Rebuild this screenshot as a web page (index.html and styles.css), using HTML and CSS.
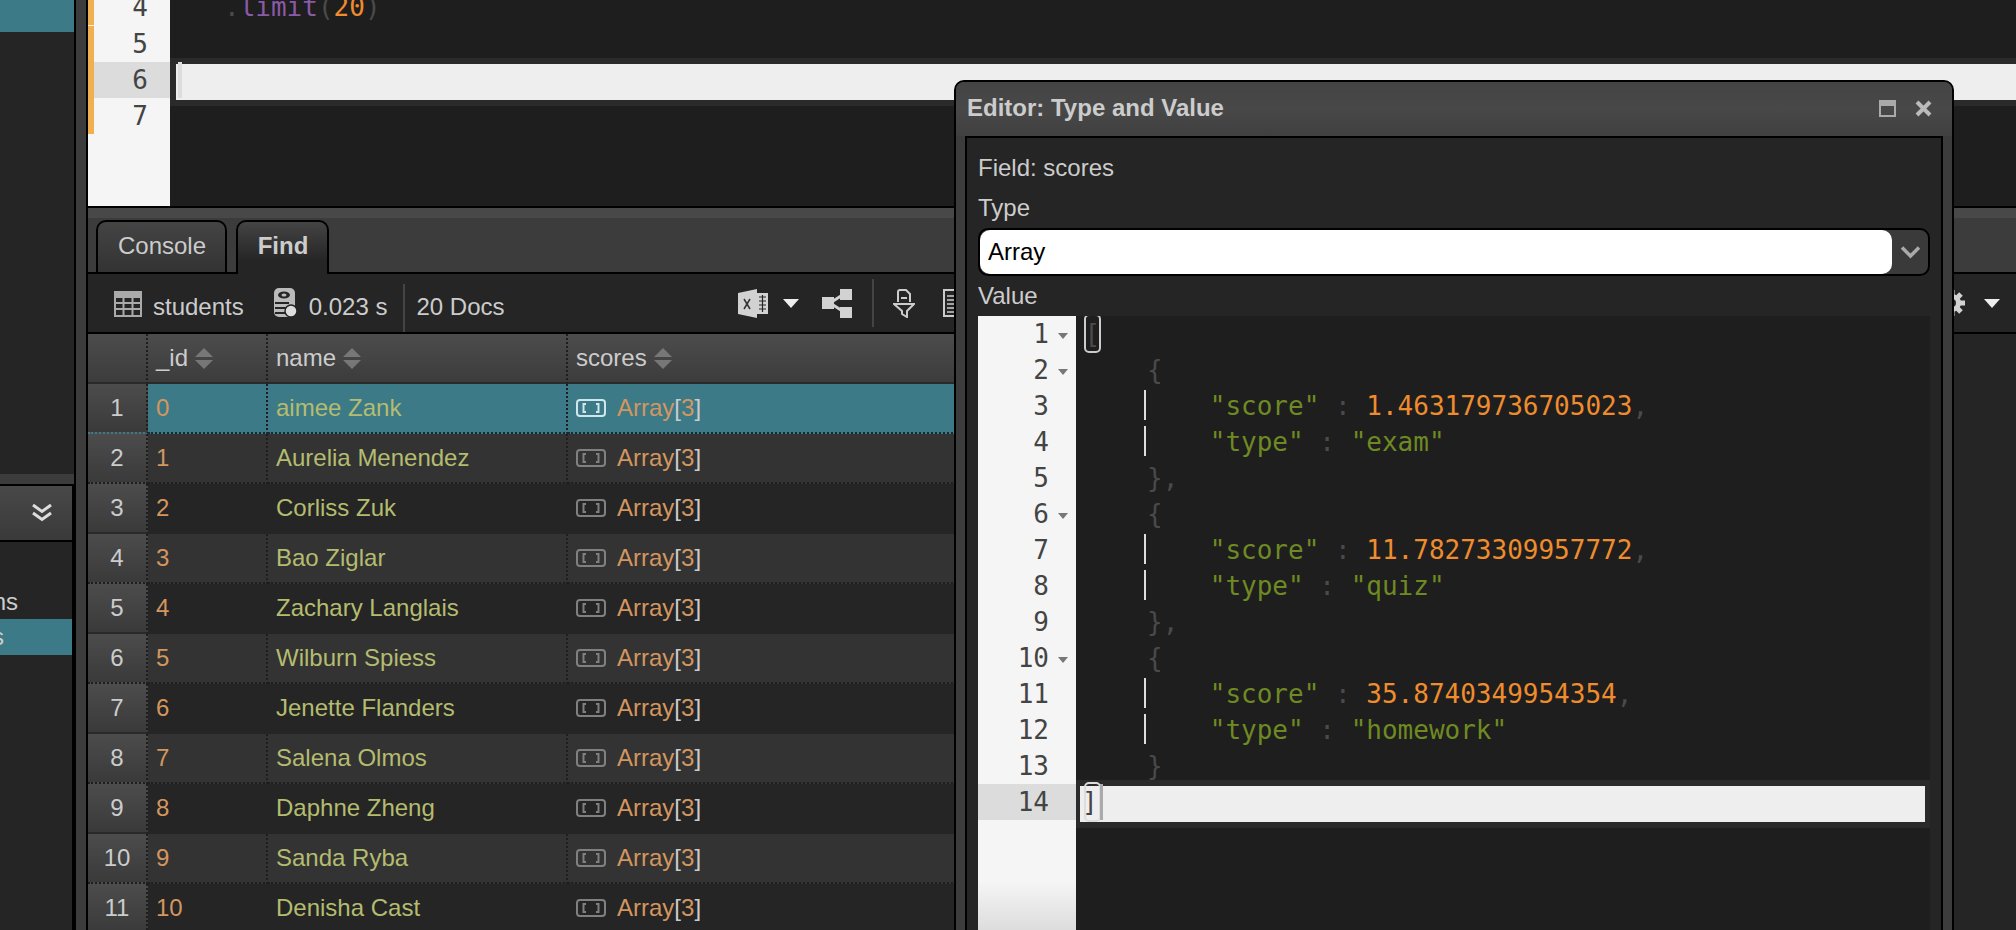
FILE: index.html
```html
<!DOCTYPE html>
<html lang="en">
<head>
<meta charset="utf-8">
<title>Editor: Type and Value</title>
<link rel="stylesheet" href="styles.css">
</head>
<body>
<div class="app">
  <aside class="sidebar">
    <div class="side-top"><div class="side-teal"></div></div>
    <div class="side-strip"></div>
    <div class="side-head">
      <svg class="chev" viewBox="0 0 22 20"><path d="M2 2l9 6.500L20 2M2 10l9 6.500L20 10" fill="none" stroke="#ddd" stroke-width="3"/></svg>
    </div>
    <div class="side-list">
      <div class="tree-row tree-plain">Collections</div>
      <div class="tree-row tree-sel">students</div>
    </div>
  </aside>
  <div class="splitter"></div>
  <main class="main">
    <section class="editor">
      <div class="ed-gutter">
        <div class="g-line">4</div>
        <div class="g-line">5</div>
        <div class="g-line g-active">6</div>
        <div class="g-line">7</div>
      </div>
      <div class="ed-code">
        <div class="c-line"><span class="p">   .</span><span class="fn">limit</span><span class="p">(</span><span class="n">20</span><span class="p">)</span></div>
        <div class="c-line"></div>
        <div class="c-line c-active"><i class="cursor-tint"></i></div>
        <div class="c-line"></div>
      </div>
    </section>
    <nav class="tabs">
      <div class="tab">Console</div>
      <div class="tab tab-on">Find</div>
    </nav>
    <div class="toolbar">
      <div class="tb-left">
        <svg class="ic-table" viewBox="0 0 28 26"><rect x="1" y="1" width="26" height="24" fill="none" stroke="#aaa" stroke-width="2"/><rect x="1" y="1" width="26" height="6" fill="#aaa"/><path d="M1 12h26M1 18h26M9.500 7v18M18.500 7v18" stroke="#aaa" stroke-width="2"/></svg>
        <span class="tb-text tb-name">students</span>
        <svg class="ic-db" viewBox="0 0 24 30"><rect x="1" y="0" width="21" height="29" rx="5" fill="#bbb"/><ellipse cx="11" cy="7" rx="6" ry="3.500" fill="#252525"/><ellipse cx="11" cy="7" rx="2.500" ry="1.500" fill="#bbb"/><path d="M2 15h14M2 20h11M2 25h10" stroke="#252525" stroke-width="2"/><circle cx="18" cy="23" r="6" fill="#ddd" stroke="#252525" stroke-width="1.500"/></svg>
        <span class="tb-text tb-time">0.023 s</span>
        <span class="tb-sep"></span>
        <span class="tb-text tb-docs">20 Docs</span>
      </div>
      <svg class="ic-excel" viewBox="0 0 30 29"><path d="M0 4L19 0v29L0 25z" fill="#d2d2d2"/><path d="M19 4h11v21H19z" fill="#d2d2d2"/><path d="M21 8h7M21 12h7M21 16h7M21 20h7M24.500 6v17" stroke="#252525" stroke-width="1.200"/><path d="M6 10l6 10M12 10l-6 10" stroke="#333" stroke-width="1.500"/></svg>
      <i class="caret caret-excel"></i>
      <svg class="ic-share" viewBox="0 0 30 29"><rect x="0" y="8" width="12" height="12" fill="#d2d2d2"/><rect x="18" y="0" width="12" height="11" fill="#d2d2d2"/><rect x="18" y="18" width="12" height="11" fill="#d2d2d2"/><path d="M8 14l14-9M8 14l14 9" stroke="#d2d2d2" stroke-width="3"/></svg>
      <span class="tb-sep tb-sep2"></span>
      <svg class="ic-filter" viewBox="0 0 22 29"><path d="M5 13V3a2 2 0 0 1 2-2h6l4 4v8" fill="none" stroke="#ccc" stroke-width="2"/><path d="M8 9h6" stroke="#ccc" stroke-width="2"/><path d="M1 15h20l-7 7v6l-5-3v-3z" fill="none" stroke="#ccc" stroke-width="2"/></svg>
      <svg class="ic-doc" viewBox="0 0 20 28"><rect x="1" y="1" width="18" height="26" fill="none" stroke="#ccc" stroke-width="2"/><path d="M4 7h12M4 11h12M4 15h12M4 19h12M4 23h12" stroke="#ccc" stroke-width="1.500"/></svg>
      <svg class="ic-gear" viewBox="0 0 28 28"><circle cx="14" cy="14" r="9" fill="#d2d2d2"/><g stroke="#d2d2d2" stroke-width="5"><path d="M14 1v26M1 14h26M5 5l18 18M23 5L5 23"/></g><circle cx="14" cy="14" r="4" fill="#252525"/></svg>
      <i class="caret caret-gear"></i>
    </div>
    <div class="grid">
      <div class="row head">
        <div class="num"></div>
        <div class="cell">_id<i class="sort"></i></div>
        <div class="cell">name<i class="sort"></i></div>
        <div class="cell">scores<i class="sort"></i></div>
      </div>
      <div class="row sel"><div class="num">1</div><div class="cell id">0</div><div class="cell nm">aimee Zank</div><div class="cell arr"><svg class="ic-arr" viewBox="0 0 30 18"><rect x="1" y="1" width="28" height="16" rx="3" fill="none" stroke="currentColor" stroke-width="2"/><path d="M10 5H7.500v8H10M20 5h2.500v8H20" fill="none" stroke="currentColor" stroke-width="2"/></svg><span class="id">Array</span><b>[</b><span class="id">3</span><b>]</b></div></div>
      <div class="row odd"><div class="num">2</div><div class="cell id">1</div><div class="cell nm">Aurelia Menendez</div><div class="cell arr"><svg class="ic-arr" viewBox="0 0 30 18"><rect x="1" y="1" width="28" height="16" rx="3" fill="none" stroke="currentColor" stroke-width="2"/><path d="M10 5H7.500v8H10M20 5h2.500v8H20" fill="none" stroke="currentColor" stroke-width="2"/></svg><span class="id">Array</span><b>[</b><span class="id">3</span><b>]</b></div></div>
      <div class="row even"><div class="num">3</div><div class="cell id">2</div><div class="cell nm">Corliss Zuk</div><div class="cell arr"><svg class="ic-arr" viewBox="0 0 30 18"><rect x="1" y="1" width="28" height="16" rx="3" fill="none" stroke="currentColor" stroke-width="2"/><path d="M10 5H7.500v8H10M20 5h2.500v8H20" fill="none" stroke="currentColor" stroke-width="2"/></svg><span class="id">Array</span><b>[</b><span class="id">3</span><b>]</b></div></div>
      <div class="row odd"><div class="num">4</div><div class="cell id">3</div><div class="cell nm">Bao Ziglar</div><div class="cell arr"><svg class="ic-arr" viewBox="0 0 30 18"><rect x="1" y="1" width="28" height="16" rx="3" fill="none" stroke="currentColor" stroke-width="2"/><path d="M10 5H7.500v8H10M20 5h2.500v8H20" fill="none" stroke="currentColor" stroke-width="2"/></svg><span class="id">Array</span><b>[</b><span class="id">3</span><b>]</b></div></div>
      <div class="row even"><div class="num">5</div><div class="cell id">4</div><div class="cell nm">Zachary Langlais</div><div class="cell arr"><svg class="ic-arr" viewBox="0 0 30 18"><rect x="1" y="1" width="28" height="16" rx="3" fill="none" stroke="currentColor" stroke-width="2"/><path d="M10 5H7.500v8H10M20 5h2.500v8H20" fill="none" stroke="currentColor" stroke-width="2"/></svg><span class="id">Array</span><b>[</b><span class="id">3</span><b>]</b></div></div>
      <div class="row odd"><div class="num">6</div><div class="cell id">5</div><div class="cell nm">Wilburn Spiess</div><div class="cell arr"><svg class="ic-arr" viewBox="0 0 30 18"><rect x="1" y="1" width="28" height="16" rx="3" fill="none" stroke="currentColor" stroke-width="2"/><path d="M10 5H7.500v8H10M20 5h2.500v8H20" fill="none" stroke="currentColor" stroke-width="2"/></svg><span class="id">Array</span><b>[</b><span class="id">3</span><b>]</b></div></div>
      <div class="row even"><div class="num">7</div><div class="cell id">6</div><div class="cell nm">Jenette Flanders</div><div class="cell arr"><svg class="ic-arr" viewBox="0 0 30 18"><rect x="1" y="1" width="28" height="16" rx="3" fill="none" stroke="currentColor" stroke-width="2"/><path d="M10 5H7.500v8H10M20 5h2.500v8H20" fill="none" stroke="currentColor" stroke-width="2"/></svg><span class="id">Array</span><b>[</b><span class="id">3</span><b>]</b></div></div>
      <div class="row odd"><div class="num">8</div><div class="cell id">7</div><div class="cell nm">Salena Olmos</div><div class="cell arr"><svg class="ic-arr" viewBox="0 0 30 18"><rect x="1" y="1" width="28" height="16" rx="3" fill="none" stroke="currentColor" stroke-width="2"/><path d="M10 5H7.500v8H10M20 5h2.500v8H20" fill="none" stroke="currentColor" stroke-width="2"/></svg><span class="id">Array</span><b>[</b><span class="id">3</span><b>]</b></div></div>
      <div class="row even"><div class="num">9</div><div class="cell id">8</div><div class="cell nm">Daphne Zheng</div><div class="cell arr"><svg class="ic-arr" viewBox="0 0 30 18"><rect x="1" y="1" width="28" height="16" rx="3" fill="none" stroke="currentColor" stroke-width="2"/><path d="M10 5H7.500v8H10M20 5h2.500v8H20" fill="none" stroke="currentColor" stroke-width="2"/></svg><span class="id">Array</span><b>[</b><span class="id">3</span><b>]</b></div></div>
      <div class="row odd"><div class="num">10</div><div class="cell id">9</div><div class="cell nm">Sanda Ryba</div><div class="cell arr"><svg class="ic-arr" viewBox="0 0 30 18"><rect x="1" y="1" width="28" height="16" rx="3" fill="none" stroke="currentColor" stroke-width="2"/><path d="M10 5H7.500v8H10M20 5h2.500v8H20" fill="none" stroke="currentColor" stroke-width="2"/></svg><span class="id">Array</span><b>[</b><span class="id">3</span><b>]</b></div></div>
      <div class="row even"><div class="num">11</div><div class="cell id">10</div><div class="cell nm">Denisha Cast</div><div class="cell arr"><svg class="ic-arr" viewBox="0 0 30 18"><rect x="1" y="1" width="28" height="16" rx="3" fill="none" stroke="currentColor" stroke-width="2"/><path d="M10 5H7.500v8H10M20 5h2.500v8H20" fill="none" stroke="currentColor" stroke-width="2"/></svg><span class="id">Array</span><b>[</b><span class="id">3</span><b>]</b></div></div>
    </div>
  </main>
</div>

<div class="dialog">
  <header class="dlg-title">
    <span class="dlg-name">Editor: Type and Value</span>
    <svg class="ic-max" viewBox="0 0 17 17"><rect x="1" y="1" width="15" height="15" fill="none" stroke="#aaa" stroke-width="2"/><rect x="1" y="1" width="15" height="5" fill="#aaa"/></svg>
    <svg class="ic-close" viewBox="0 0 17 17"><path d="M2 2l13 13M15 2L2 15" stroke="#bbb" stroke-width="4"/></svg>
  </header>
  <div class="dlg-body">
    <div class="lbl lbl-field">Field: scores</div>
    <div class="lbl lbl-type">Type</div>
    <div class="select">
      <div class="select-val">Array</div>
      <svg class="select-chev" viewBox="0 0 21 14"><path d="M2 2.500l8.500 8.500 8.500-8.500" fill="none" stroke="#aaa" stroke-width="3.500"/></svg>
    </div>
    <div class="lbl lbl-value">Value</div>
    <div class="json">
      <div class="j-gutter">
        <div class="jg"><span>1</span><i class="fold"></i></div>
        <div class="jg"><span>2</span><i class="fold"></i></div>
        <div class="jg"><span>3</span><i class="nofold"></i></div>
        <div class="jg"><span>4</span><i class="nofold"></i></div>
        <div class="jg"><span>5</span><i class="nofold"></i></div>
        <div class="jg"><span>6</span><i class="fold"></i></div>
        <div class="jg"><span>7</span><i class="nofold"></i></div>
        <div class="jg"><span>8</span><i class="nofold"></i></div>
        <div class="jg"><span>9</span><i class="nofold"></i></div>
        <div class="jg"><span>10</span><i class="fold"></i></div>
        <div class="jg"><span>11</span><i class="nofold"></i></div>
        <div class="jg"><span>12</span><i class="nofold"></i></div>
        <div class="jg"><span>13</span><i class="nofold"></i></div>
        <div class="jg jg-active"><span>14</span><i class="nofold"></i></div>
      </div>
      <div class="j-code">
        <div class="jl"><i class="match match-open"></i><span class="p">[</span></div>
        <div class="jl"><span class="p">    {</span></div>
        <div class="jl"><i class="guide"></i>        <span class="s">"score"</span><span class="p"> : </span><span class="n">1.463179736705023</span><span class="p">,</span></div>
        <div class="jl"><i class="guide"></i>        <span class="s">"type"</span><span class="p"> : </span><span class="s">"exam"</span></div>
        <div class="jl"><span class="p">    },</span></div>
        <div class="jl"><span class="p">    {</span></div>
        <div class="jl"><i class="guide"></i>        <span class="s">"score"</span><span class="p"> : </span><span class="n">11.78273309957772</span><span class="p">,</span></div>
        <div class="jl"><i class="guide"></i>        <span class="s">"type"</span><span class="p"> : </span><span class="s">"quiz"</span></div>
        <div class="jl"><span class="p">    },</span></div>
        <div class="jl"><span class="p">    {</span></div>
        <div class="jl"><i class="guide"></i>        <span class="s">"score"</span><span class="p"> : </span><span class="n">35.8740349954354</span><span class="p">,</span></div>
        <div class="jl"><i class="guide"></i>        <span class="s">"type"</span><span class="p"> : </span><span class="s">"homework"</span></div>
        <div class="jl"><span class="p">    }</span></div>
        <div class="jl jl-active"><i class="match match-close"></i><i class="cursor"></i><span class="close-br">]</span></div>
      </div>
    </div>
  </div>
</div>
</body>
</html>
```

FILE: styles.css
```css
* { box-sizing: border-box; }
html, body { margin: 0; height: 100%; overflow: hidden; background: #252525; }
body { font: 24px/1.2 "Liberation Sans", Arial, sans-serif; color: #ccc; position: relative; }
i { display: block; font-style: normal; }
svg { display: block; flex: none; }

.app { display: flex; width: 2016px; height: 930px; overflow: hidden; }

/* sidebar */
.sidebar { width: 76px; flex: none; display: flex; flex-direction: column; background: #000; }
.side-top { height: 474px; background: #252525; margin-right: 2px; }
.side-teal { height: 32px; background: #3d7a87; }
.side-strip { height: 10px; background: #3c3c3c; margin-right: 2px; }
.side-head { height: 58px; border-top: 2px solid #000; border-bottom: 2px solid #000; margin-right: 4px; background: linear-gradient(#484848, #3a3a3a); display: flex; align-items: center; justify-content: flex-end; padding-right: 19px; }
.chev { width: 22px; height: 20px; }
.side-list { flex: 1; background: #252525; margin-right: 4px; padding-top: 42px; overflow: hidden; }
.tree-row { height: 35px; line-height: 35px; display: flex; justify-content: flex-end; white-space: nowrap; overflow: hidden; }
.tree-plain { padding-right: 54px; }
.tree-sel { height: 36px; line-height: 36px; background: #3d7a87; padding-right: 68px; }

.splitter { width: 12px; flex: none; background: #3c3c3c; border-right: 2px solid #000; }

/* main */
.main { flex: 1; min-width: 0; display: flex; flex-direction: column; background: #252525; }

/* top editor */
.editor { height: 208px; flex: none; display: flex; background: #1e1e1e; border-bottom: 2px solid #000; overflow: hidden; font: 26px/36px "DejaVu Sans Mono", monospace; }
.ed-gutter { width: 82px; flex: none; background: #f5f5f5; color: #444; }
.g-line { height: 36px; padding-right: 22px; text-align: right; border-left: 6px solid #f0b050; }
.g-line:first-child { margin-top: -11px; margin-bottom: 1px; }
.g-active { background: #dcdcdc; }
.ed-code { flex: 1; isolation: isolate; }
.c-line { height: 36px; position: relative; padding-left: 7px; white-space: pre; }
.c-line:first-child { margin-top: -11px; margin-bottom: 1px; }
.c-active::before { content: ""; position: absolute; left: 0; right: 0; top: -4px; height: 48px; background: #2a2a2a; z-index: -2; }
.c-active::after { content: ""; position: absolute; left: 6px; right: 0; top: 2px; height: 36px; background: #eee; z-index: -1; }
.cursor-tint { position: absolute; left: 8px; top: 0; width: 4px; height: 36px; background: #ddd; }
.p { color: #4a4a4a; }
.fn { color: #8a5aa8; }
.n { color: #ef8c2d; }
.s { color: #6f8a22; }

/* tabs */
.tabs { height: 66px; flex: none; background: linear-gradient(#484848 0 10px, #3c3c3c 10px); border-bottom: 2px solid #000; display: flex; align-items: flex-end; padding-left: 8px; gap: 9px; }
.tab { height: 52px; width: 131px; border: 2px solid #000; border-bottom: 0; border-radius: 10px 10px 0 0; background: linear-gradient(#444, #333); text-align: center; line-height: 48px; padding-left: 1px; }
.tab-on { width: 93px; height: 54px; margin-bottom: -2px; font-weight: bold; line-height: 48px; background: linear-gradient(#444, #252525 75%); }

/* toolbar */
.toolbar { height: 60px; flex: none; display: flex; align-items: center; background: #252525; border-bottom: 2px solid #000; overflow: hidden; }
.tb-left { width: 650px; flex: none; display: flex; align-items: center; padding-left: 26px; height: 100%; }
.tb-text { position: relative; top: 4px; }
.ic-table { width: 28px; height: 26px; margin-top: 2px; }
.tb-name { margin-left: 11px; }
.ic-db { width: 24px; height: 30px; margin-left: 29px; }
.tb-time { margin-left: 12px; }
.tb-sep { width: 2px; height: 48px; background: #444; margin-left: 16px; margin-top: 10px; }
.tb-docs { margin-left: 11px; }
.ic-excel { width: 30px; height: 29px; }
.caret { width: 0; height: 0; border-left: 8px solid transparent; border-right: 8px solid transparent; border-top: 9px solid #eee; }
.caret-excel { margin-left: 15px; }
.ic-share { width: 30px; height: 29px; margin-left: 23px; }
.tb-sep2 { margin-left: 20px; margin-top: 0; }
.ic-filter { width: 22px; height: 29px; margin-left: 19px; }
.ic-doc { width: 20px; height: 28px; margin-left: 28px; }
.ic-gear { width: 28px; height: 28px; margin-left: auto; }
.caret-gear { margin-left: 18px; margin-right: 16px; }

/* grid */
.grid { width: 1400px; flex: none; }
.row { display: grid; grid-template-columns: 60px 120px 300px 1fr; height: 50px; align-items: stretch; }
.num, .cell { display: flex; align-items: center; line-height: 48px; border-bottom: 2px dotted #1e1e1e; }
.num { justify-content: center; background: linear-gradient(#4c4c4c, #3a3a3a); border-right: 2px dotted #1e1e1e; }
.cell { padding-left: 8px; border-right: 2px dotted #1e1e1e; }
.head .num, .head .cell { background: linear-gradient(#4c4c4c, #3c3c3c); border-bottom: 2px solid #2a2a2a; }
.head { background: #3c3c3c; }
.sel { background: #3d7a87; }
.sel .num { border-bottom-color: #3d7a87; }
.sel .cell { border-bottom-color: #1a2a2e; }
.sel .ic-arr { color: #cfe6ec; }
.odd { background: #333; }
.even { background: #252525; }
.even .cell { border-color: #252525; }
.even .num { border-bottom: 2px solid #2a2a2a; }
.id { color: #d4965f; }
.nm { color: #b4bc70; }
.arr b { font-weight: normal; color: #ccc; }
.ic-arr { width: 30px; height: 18px; margin-right: 11px; color: #808080; }
.sort { width: 19px; height: 21px; margin-left: 7px; position: relative; }
.sort::before, .sort::after { content: ""; position: absolute; left: 0; width: 0; height: 0; border-left: 9.500px solid transparent; border-right: 9.500px solid transparent; }
.sort::before { top: 0; border-bottom: 9px solid #777; }
.sort::after { bottom: 0; border-top: 9px solid #777; }

/* dialog */
.dialog { position: absolute; left: 954px; top: 80px; width: 1000px; height: 880px; border: 2px solid #000; border-radius: 10px 10px 0 0; background: #3c3c3c; }
.dlg-title { height: 54px; display: flex; align-items: center; padding: 0 20px 2px 11px; background: linear-gradient(#444, #484848 50%, #404040); border-radius: 8px 8px 0 0; }
.dlg-name { font-weight: bold; flex: 1; }
.ic-max { width: 17px; height: 17px; margin-right: 19px; }
.ic-close { width: 17px; height: 17px; }
.dlg-body { margin-left: 9px; width: 978px; height: 822px; border: 2px solid #000; border-bottom: 0; background: #252525; padding: 0 9px 0 11px; }
.lbl { line-height: 30px; }
.lbl-field { margin-top: 15px; }
.lbl-type { margin-top: 10px; }
.select { margin-top: 5px; height: 48px; width: 952px; border: 2px solid #000; border-radius: 10px; background: #3a3a3a; display: flex; align-items: center; }
.select-val { width: 912px; height: 44px; background: #fff; border-radius: 10px; color: #000; line-height: 44px; padding-left: 8px; }
.select-chev { width: 21px; height: 14px; margin-left: 8px; }
.lbl-value { margin-top: 5px; }
.json { margin-top: 5px; width: 952px; display: flex; height: 614px; background: #1e1e1e; font: 26px/36px "DejaVu Sans Mono", monospace; overflow: hidden; }
.j-gutter { width: 98px; flex: none; color: #444; background: linear-gradient(#f5f5f5 565px, #ddd); }
.jg { height: 36px; display: flex; justify-content: flex-end; align-items: center; }
.jg-active { background: #dcdcdc; }
.fold { width: 27px; height: 6px; margin-top: 4px; position: relative; }
.fold::after { content: ""; position: absolute; left: 9px; top: 0; width: 0; height: 0; border-left: 5px solid transparent; border-right: 5px solid transparent; border-top: 6px solid #777; }
.nofold { width: 27px; }
.j-code { flex: 1; isolation: isolate; }
.jl { height: 36px; position: relative; padding-left: 8.500px; white-space: pre; }
.jl-active { padding-left: 6px; }
.jl-active::before { content: ""; position: absolute; left: 0; right: 0; top: -4px; height: 48px; background: #2a2a2a; z-index: -2; }
.jl-active::after { content: ""; position: absolute; left: 4px; right: 5px; top: 2px; height: 36px; background: #eee; z-index: -1; }
.guide { position: absolute; left: 68px; top: 2px; width: 2px; height: 30px; background: #ddd; }
.match { position: absolute; left: 8px; width: 17px; border: 2px solid #ccc; border-radius: 5px; }
.match-open { top: -2px; height: 39px; }
.match-close { top: -2px; height: 40px; border-color: #ddd; }
.cursor { position: absolute; left: 24px; top: 0; width: 3px; height: 36px; background: #aaa; }
.close-br { color: #444; }
```
